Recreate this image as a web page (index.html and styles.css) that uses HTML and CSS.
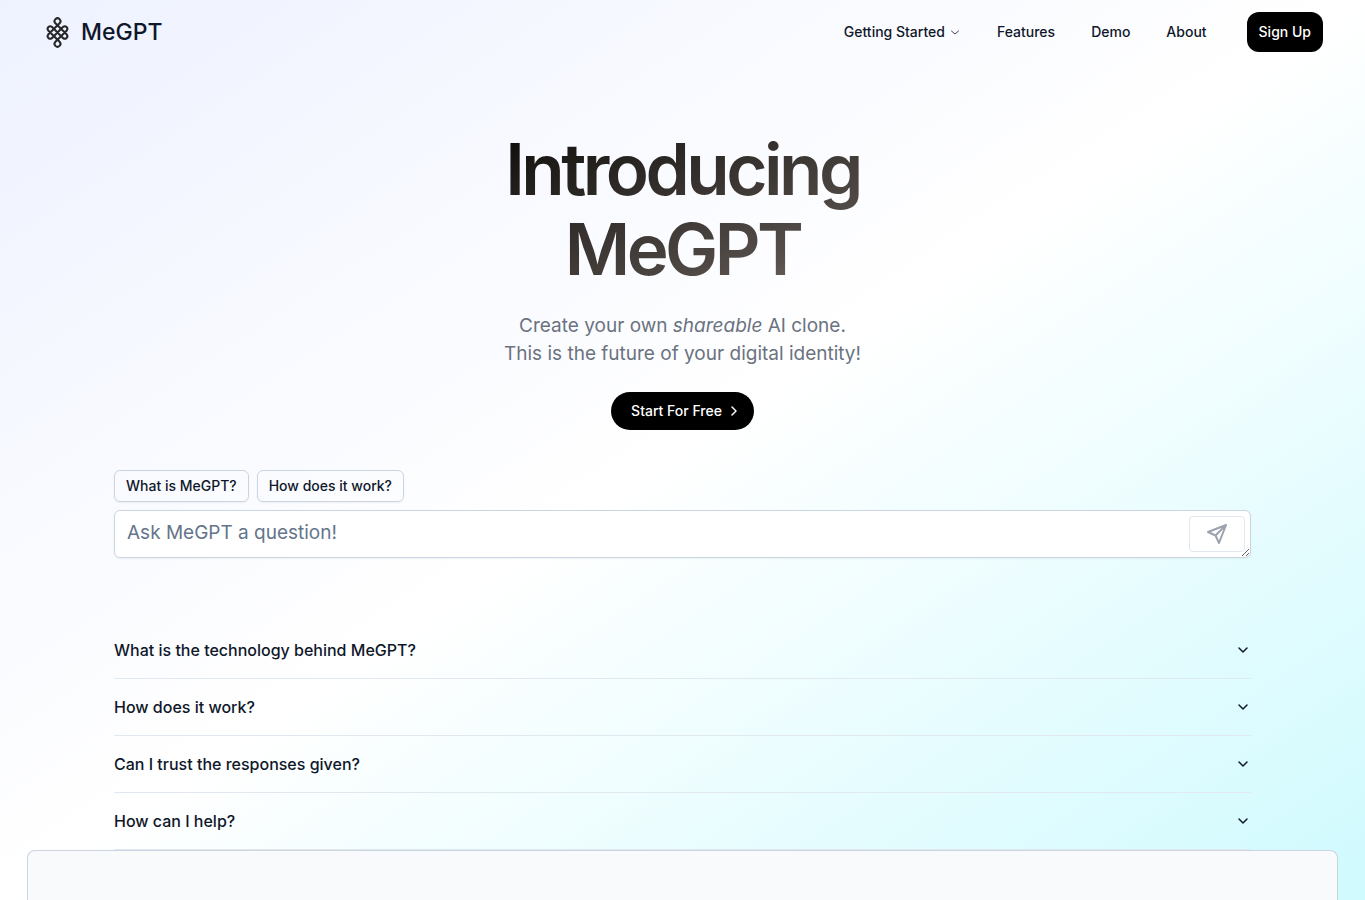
FILE: index.html
```html
<!DOCTYPE html>
<html lang="en">
<head>
<meta charset="utf-8">
<meta name="viewport" content="width=device-width, initial-scale=1">
<title>MeGPT</title>
<link rel="stylesheet" href="styles.css">
</head>
<body>
<header class="header">
  <a class="brand" href="#">
    <svg class="brand-mark" viewBox="0 0 22 30" aria-hidden="true">
      <path d="M13 6 2 17A2.5 2.5 0 0 0 5.5 20.5L16.500 9.500A2.500 2.500 0 0 1 20 13L9 24A2.800 2.800 0 1 0 13 24L2 13A2.500 2.500 0 0 1 5.500 9.500L16.500 20.500A2.500 2.500 0 0 0 20 17L9 6A2.800 2.800 0 1 1 13 6Z"/>
    </svg>
    <span>MeGPT</span>
  </a>
  <nav class="nav">
    <button class="nav-item" type="button">Getting Started
      <svg class="nav-chevron" viewBox="0 0 12 12" aria-hidden="true"><path d="M2.500 5 6 8l3.500-3"/></svg>
    </button>
    <a class="nav-item" href="#features">Features</a>
    <a class="nav-item" href="#demo">Demo</a>
    <a class="nav-item" href="#about">About</a>
    <a class="signup" href="#signup">Sign Up</a>
  </nav>
</header>
<main>
  <section class="hero">
    <h1 class="title">Introducing<br>MeGPT</h1>
    <p class="lead">Create your own <em>shareable</em> AI clone.<br>This is the future of your digital identity!</p>
    <a class="cta" href="#start">Start For Free
      <svg class="cta-arrow" viewBox="0 0 16 16" aria-hidden="true"><path d="m6 4 4 4-4 4"/></svg>
    </a>
  </section>
  <section class="content">
    <div class="prompts">
      <button class="prompt" type="button">What is MeGPT?</button>
      <button class="prompt" type="button">How does it work?</button>
    </div>
    <form class="ask">
      <textarea class="ask-input" rows="1" aria-label="Question" placeholder="Ask MeGPT a question!"></textarea>
      <button class="send" type="button" aria-label="Send">
        <svg viewBox="0 0 24 24" aria-hidden="true"><path d="M21 3 14 21 10.500 13.500 3 10ZM21 3 10.500 13.500"/></svg>
      </button>
    </form>
    <div class="faq">
      <button class="faq-item" type="button">What is the technology behind MeGPT?<svg viewBox="0 0 16 16" aria-hidden="true"><path d="m4 6 4 4 4-4"/></svg></button>
      <button class="faq-item" type="button">How does it work?<svg viewBox="0 0 16 16" aria-hidden="true"><path d="m4 6 4 4 4-4"/></svg></button>
      <button class="faq-item" type="button">Can I trust the responses given?<svg viewBox="0 0 16 16" aria-hidden="true"><path d="m4 6 4 4 4-4"/></svg></button>
      <button class="faq-item" type="button">How can I help?<svg viewBox="0 0 16 16" aria-hidden="true"><path d="m4 6 4 4 4-4"/></svg></button>
    </div>
  </section>
</main>
<footer class="footer"></footer>
</body>
</html>
```
FILE: styles.css
```css
*, *::before, *::after { box-sizing: border-box; }
body {
  margin: 0;
  min-height: 100vh;
  display: flex;
  flex-direction: column;
  font-family: Inter, "Liberation Sans", sans-serif;
  font-size: 14px;
  line-height: 20px;
  color: #0f172a;
  background: linear-gradient(to bottom right, #eef2ff, #fff, #cffafe);
}
a { color: inherit; text-decoration: none; }
button, textarea { font: inherit; color: inherit; }
button { background: none; border: 0; padding: 0; cursor: pointer; }
svg { fill: none; stroke: currentColor; stroke-linecap: round; stroke-linejoin: round; }
main { flex: none; }

.header {
  flex: none;
  display: flex;
  align-items: center;
  justify-content: space-between;
  min-height: 64px;
  padding: 0 42px;
}
.brand { display: flex; align-items: center; gap: 12px; padding-left: 4px; font-size: 23px; line-height: 32px; font-weight: 500; }
.brand-mark { width: 23px; height: 31px; stroke: #262626; stroke-width: 2; }
.nav { display: flex; align-items: center; gap: 36px; font-weight: 500; }
.nav-item { display: flex; align-items: center; gap: 4px; font-weight: 500; }
.nav-chevron { width: 12px; height: 12px; stroke-width: 1; opacity: .8; }
.signup { margin-left: 4px; padding: 10px 12px; border-radius: 12px; background: #000; color: #fff; }

.hero { display: flex; flex-direction: column; align-items: center; padding-top: 65px; text-align: center; }
.title {
  margin: 0;
  font-size: 71px;
  line-height: 80px;
  font-weight: 600;
  letter-spacing: -0.05em;
  background: linear-gradient(to bottom right, #0c0a09, #1c1917 15%, #57504c 80%, #78716c);
  -webkit-background-clip: text;
  background-clip: text;
  color: transparent;
}
.lead { margin: 23px 0 24px; font-size: 19px; line-height: 28px; color: #6b7280; }
.cta { display: flex; align-items: center; gap: 4px; padding: 9px 12px 9px 20px; border-radius: 20px; background: #000; color: #fff; font-weight: 500; }
.cta-arrow { width: 16px; height: 16px; stroke-width: 1.5; }

.content { padding: 40px 114px 0; }
.prompts { display: flex; gap: 8px; margin-bottom: 8px; }
.prompt { height: 32px; padding: 0 11px; border: 1px solid #cbd5e1; border-radius: 6px; box-shadow: 0 1px 2px rgba(0, 0, 0, .05); font-weight: 500; }
.ask { position: relative; display: flex; }
.ask-input { width: 100%; height: 48px; padding: 8px 12px; border: 1px solid #cbd5e1; border-radius: 6px; background: #fff; font-size: 19px; line-height: 28px; box-shadow: 0 1px 2px rgba(0, 0, 0, .05); resize: vertical; }
.ask-input::placeholder { color: #64748b; opacity: 1; }
.send { position: absolute; top: 6px; right: 6px; width: 56px; height: 36px; display: grid; place-items: center; border: 1px solid #e2e8f0; border-radius: 4px; color: #9ca3af; pointer-events: none; }
.send svg { width: 24px; height: 24px; stroke-width: 2; }
.faq { padding-top: 64px; }
.faq-item { display: flex; align-items: center; justify-content: space-between; width: 100%; padding: 16px 0; border-bottom: 1px solid #e2e8f0; font-size: 16px; line-height: 24px; font-weight: 500; text-align: left; }
.faq-item svg { width: 16px; height: 16px; stroke-width: 1.5; }

.footer { flex: 1; margin: 0 27px; border: 1px solid #cbd5e1; border-bottom: 0; border-radius: 8px 8px 0 0; background: #f8fafc; }
```
